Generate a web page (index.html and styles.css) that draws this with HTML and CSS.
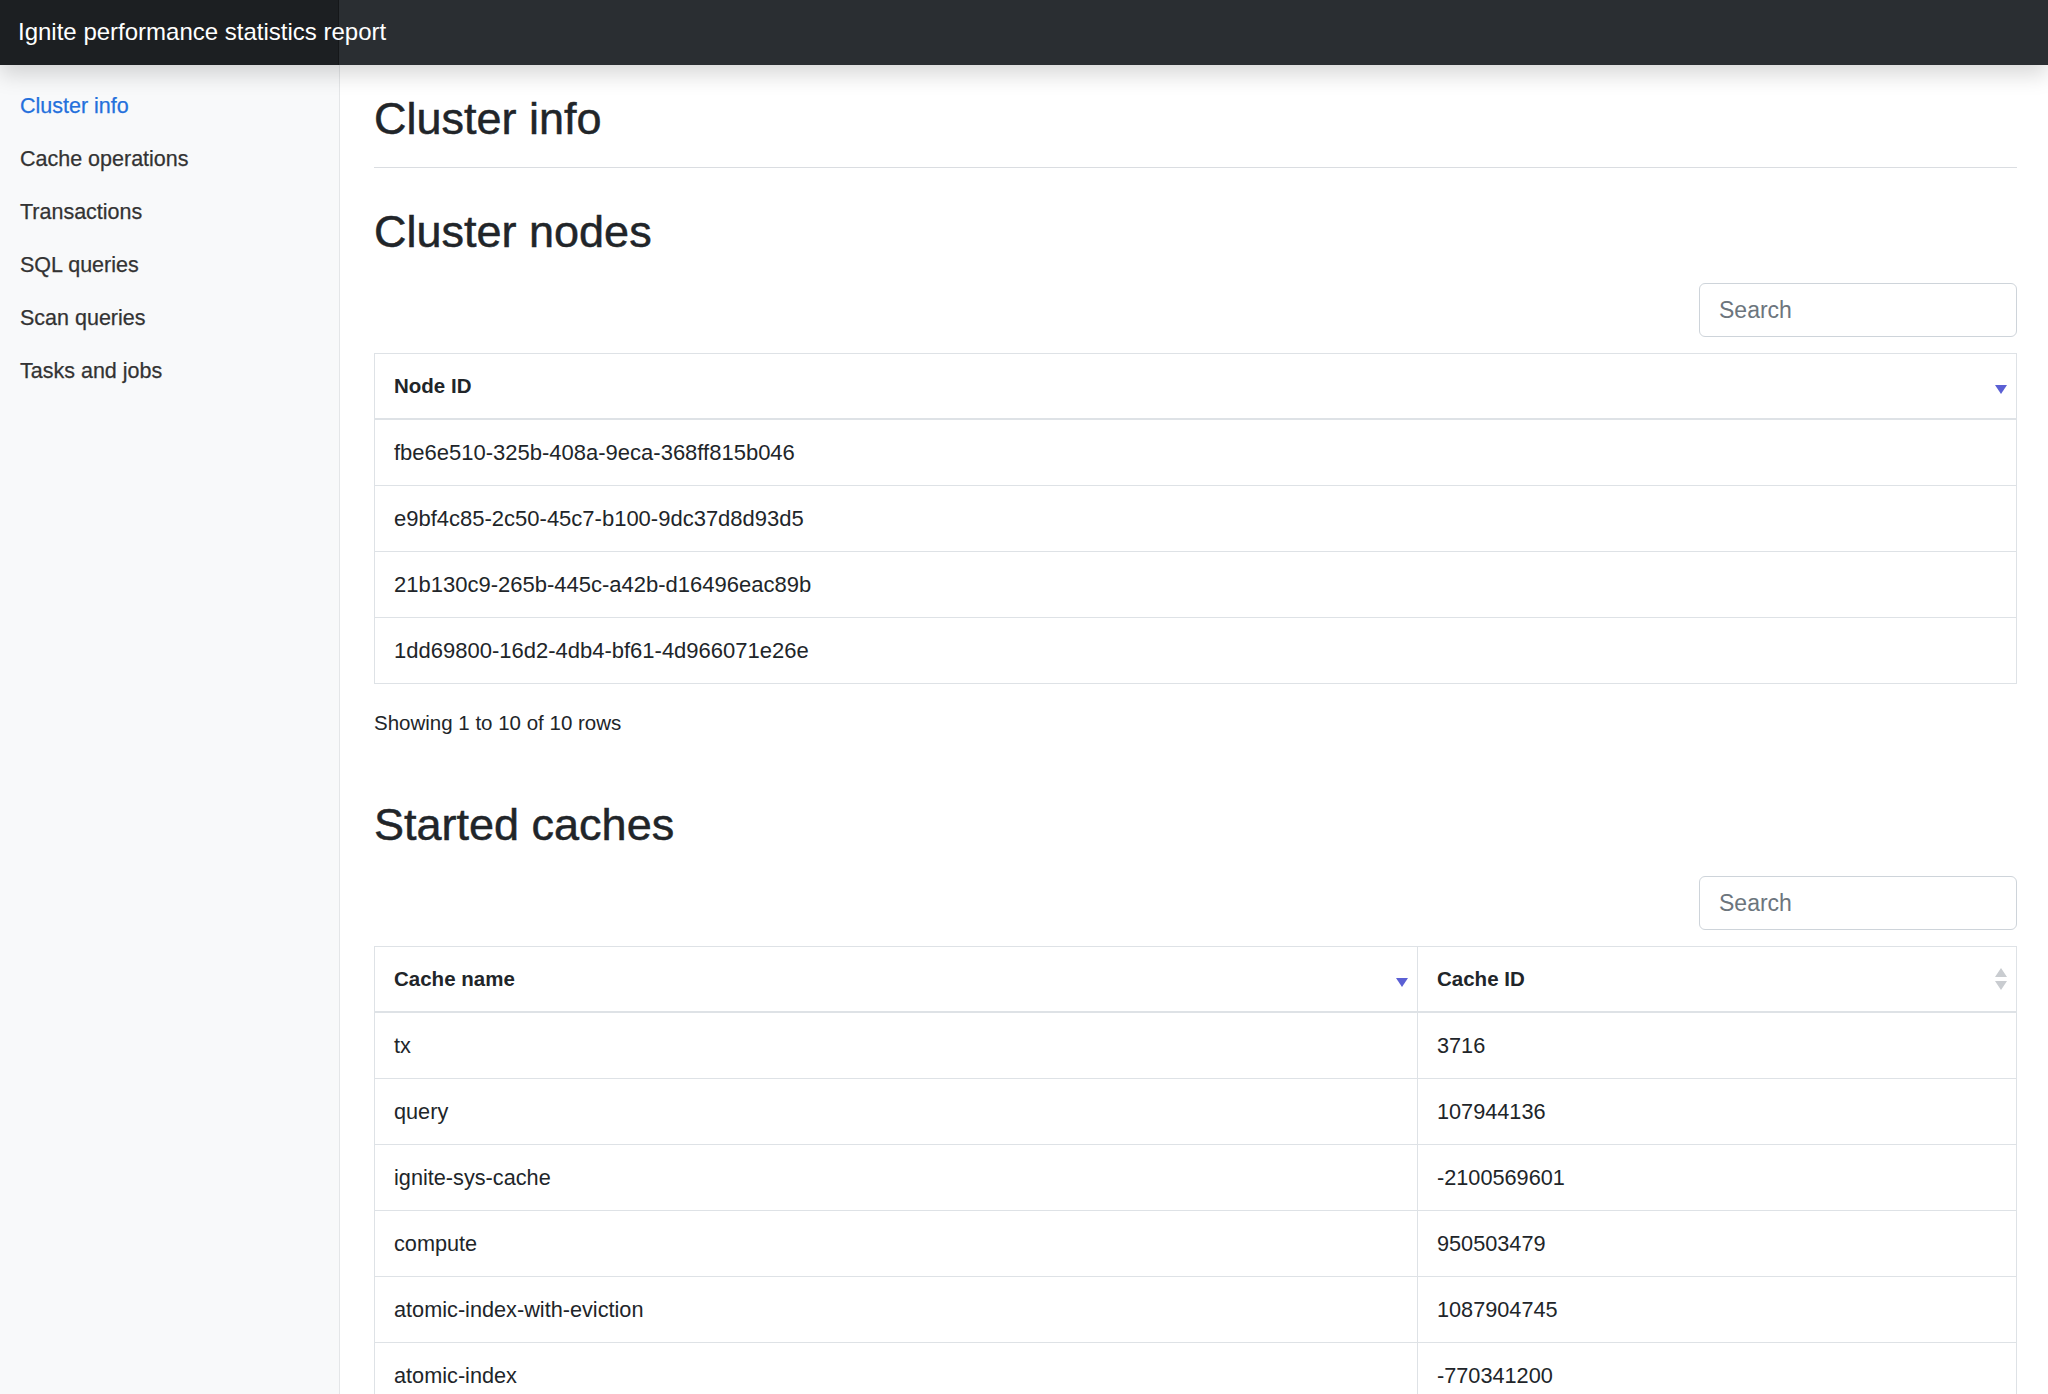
FILE: index.html
```html
<!DOCTYPE html>
<html lang="en">
<head>
    <meta charset="UTF-8">
    <meta name="viewport" content="width=device-width, initial-scale=1.0">
    <title>Ignite performance statistics report</title>
    <link rel="stylesheet" href="styles.css">
</head>
<body>
    <!-- Top bar -->
    <header class="navbar">
        <a class="brand" href="#">Ignite performance statistics report</a>
    </header>

    <div class="layout">
        <!-- Side menu -->
        <nav class="sidebar">
            <ul class="nav">
                <li><a class="nav-link active" href="#">Cluster info</a></li>
                <li><a class="nav-link" href="#">Cache operations</a></li>
                <li><a class="nav-link" href="#">Transactions</a></li>
                <li><a class="nav-link" href="#">SQL queries</a></li>
                <li><a class="nav-link" href="#">Scan queries</a></li>
                <li><a class="nav-link" href="#">Tasks and jobs</a></li>
            </ul>
        </nav>

        <main class="content">
            <div class="page-header">
                <h1>Cluster info</h1>
            </div>

            <!-- Cluster nodes -->
            <section class="block">
                <h2>Cluster nodes</h2>
                <div class="toolbar">
                    <input class="search" type="text" placeholder="Search">
                </div>
                <table class="data-table">
                    <thead>
                        <tr>
                            <th>
                                <div class="th-inner">
                                    <span>Node ID</span>
                                    <svg class="sort-desc" width="12" height="9" viewBox="0 0 12 9"><path d="M0 0 H12 L6 9 Z" fill="#5b60d4"/></svg>
                                </div>
                            </th>
                        </tr>
                    </thead>
                    <tbody>
                        <tr><td class="node-id">fbe6e510-325b-408a-9eca-368ff815b046</td></tr>
                        <tr><td class="node-id">e9bf4c85-2c50-45c7-b100-9dc37d8d93d5</td></tr>
                        <tr><td class="node-id">21b130c9-265b-445c-a42b-d16496eac89b</td></tr>
                        <tr><td class="node-id">1dd69800-16d2-4db4-bf61-4d966071e26e</td></tr>
                    </tbody>
                </table>
                <div class="pagination-info">Showing 1 to 10 of 10 rows</div>
            </section>

            <!-- Started caches -->
            <section class="block block-caches">
                <h2>Started caches</h2>
                <div class="toolbar">
                    <input class="search" type="text" placeholder="Search">
                </div>
                <table class="data-table">
                    <thead>
                        <tr>
                            <th class="col-name">
                                <div class="th-inner">
                                    <span>Cache name</span>
                                    <svg class="sort-desc" width="12" height="9" viewBox="0 0 12 9"><path d="M0 0 H12 L6 9 Z" fill="#5b60d4"/></svg>
                                </div>
                            </th>
                            <th>
                                <div class="th-inner">
                                    <span>Cache ID</span>
                                    <svg class="sort-both" width="12" height="22" viewBox="0 0 12 22"><path d="M6 0 L12 9 H0 Z M0 13 H12 L6 22 Z" fill="#c9ccd0"/></svg>
                                </div>
                            </th>
                        </tr>
                    </thead>
                    <tbody>
                        <tr><td>tx</td><td>3716</td></tr>
                        <tr><td>query</td><td>107944136</td></tr>
                        <tr><td>ignite-sys-cache</td><td>-2100569601</td></tr>
                        <tr><td>compute</td><td>950503479</td></tr>
                        <tr><td>atomic-index-with-eviction</td><td>1087904745</td></tr>
                        <tr><td>atomic-index</td><td>-770341200</td></tr>
                    </tbody>
                </table>
            </section>
        </main>
    </div>
</body>
</html>
```

FILE: styles.css
```css
/* Page */
body {
    margin: 0;
    font-family: "Liberation Sans", Arial, sans-serif;
    color: #212529;
    background-color: #fff;
}

/* Top bar */
.navbar {
    position: relative;
    z-index: 2;
    display: flex;
    height: 65px;
    background-color: #2a2e32;
    box-shadow: 0 10px 20px rgba(0, 0, 0, 0.15);
}

.brand {
    flex-shrink: 0;
    width: 321px;
    padding-left: 18px;
    line-height: 64px;
    font-size: 24px;
    white-space: nowrap; /* text runs past the darker block, as in the report */
    color: #fff;
    text-decoration: none;
    background-color: #1c1f22;
    box-shadow: inset -1px 0 0 rgba(0, 0, 0, 0.25);
}

/* Two columns under the bar */
.layout {
    display: flex;
    min-height: calc(100vh - 65px);
}

.sidebar {
    width: 339px;
    flex-shrink: 0;
    padding-top: 15px;
    background-color: #f8f9fa;
    border-right: 1px solid #e4e6e8;
}

.nav {
    list-style: none;
    margin: 0;
    padding: 0;
}

.nav-link {
    display: block;
    padding: 11px 20px;
    line-height: 31px;
    font-size: 21.5px;
    color: #333;
    text-decoration: none;
    -webkit-text-stroke: 0.25px currentColor;
}

.nav-link.active {
    color: #2470dc;
}

/* Main content */
.content {
    flex: 1;
    min-width: 0;
    padding: 27px 31px 0 34px;
}

.page-header {
    padding-bottom: 21px;
    border-bottom: 1px solid #dadde1;
}

h1,
h2 {
    margin: 0;
    font-size: 45px;
    line-height: 54px;
    font-weight: 500;
    -webkit-text-stroke: 0.5px currentColor;
}

.block h2 {
    margin-top: 37px;
}

.block-caches h2 {
    margin-top: 60px;
}

.toolbar {
    display: flex;
    justify-content: flex-end;
    margin: 24px 0 16px;
}

.search {
    box-sizing: border-box;
    width: 318px;
    height: 54px;
    padding: 0 19px;
    font-family: inherit;
    font-size: 23px;
    color: #212529;
    border: 1px solid #ced4da;
    border-radius: 6px;
}

.search::placeholder {
    color: #6c757d;
}

/* Tables */
.data-table {
    width: 100%;
    border-collapse: collapse;
    border: 1px solid #dee2e6;
}

.data-table th {
    height: 64px;
    padding: 0 9px 0 19px;
    text-align: left;
    font-size: 20.5px;
    font-weight: bold;
    border: 1px solid #dee2e6;
    border-bottom: 2px solid #dee2e6;
}

.data-table td {
    height: 65px;
    padding: 0 19px;
    font-size: 21.7px;
    border: 1px solid #dee2e6;
}

.data-table td.node-id {
    font-size: 22px;
}

.th-inner {
    display: flex;
    justify-content: space-between;
    align-items: center;
}

.sort-desc {
    margin-top: 7px;
}

.col-name {
    width: 1043px;
    box-sizing: border-box;
}

.pagination-info {
    margin-top: 23px;
    line-height: 31px;
    font-size: 20.5px;
}
```
